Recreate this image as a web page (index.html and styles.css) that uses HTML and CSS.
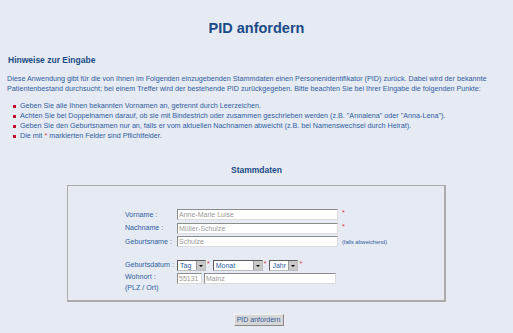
FILE: index.html
```html
<!DOCTYPE html>
<html lang="de">
<head>
<meta charset="utf-8">
<title>PID anfordern</title>
<link rel="stylesheet" href="styles.css">
</head>
<body>
<h1 class="title">PID anfordern</h1>
<h2 class="subtitle">Hinweise zur Eingabe</h2>
<p class="intro">Diese Anwendung gibt für die von Ihnen im Folgenden einzugebenden Stammdaten einen Personenidentifikator (PID) zurück. Dabei wird der bekannte Patientenbestand durchsucht; bei einem Treffer wird der bestehende PID zurückgegeben. Bitte beachten Sie bei Ihrer Eingabe die folgenden Punkte:</p>
<ul class="hints">
  <li>Geben Sie alle Ihnen bekannten Vornamen an, getrennt durch Leerzeichen.</li>
  <li>Achten Sie bei Doppelnamen darauf, ob sie mit Bindestrich oder zusammen geschrieben werden (z.B. "Annalena" oder "Anna-Lena").</li>
  <li>Geben Sie den Geburtsnamen nur an, falls er vom aktuellen Nachnamen abweicht (z.B. bei Namenswechsel durch Heirat).</li>
  <li>Die mit <span class="req">*</span> markierten Felder sind Pflichtfelder.</li>
</ul>
<h3 class="section">Stammdaten</h3>
<div class="box">
  <div class="form">
    <div class="row">
      <span class="label">Vorname :</span>
      <span class="field"><span class="input wide">Anne-Marie Luise</span><span class="req star">*</span></span>
    </div>
    <div class="row">
      <span class="label">Nachname :</span>
      <span class="field"><span class="input wide">Müller-Schulze</span><span class="req star">*</span></span>
    </div>
    <div class="row">
      <span class="label">Geburtsname :</span>
      <span class="field"><span class="input wide">Schulze</span><span class="note">(falls abweichend)</span></span>
    </div>
    <div class="row date">
      <span class="label">Geburtsdatum :</span>
      <span class="field">
        <span class="select tag"><span class="sel-text">Tag</span><span class="sel-btn"></span></span><span class="req star">*</span>
        <span class="select monat"><span class="sel-text">Monat</span><span class="sel-btn"></span></span><span class="req star">*</span>
        <span class="select jahr"><span class="sel-text">Jahr</span><span class="sel-btn"></span></span><span class="req star">*</span>
      </span>
    </div>
    <div class="row addr">
      <span class="label">Wohnort :<br>(PLZ / Ort)</span>
      <span class="field"><span class="input plz">55131</span><span class="input ort">Mainz</span></span>
    </div>
  </div>
</div>
<div class="actions"><span class="button">PID anfordern</span></div>
</body>
</html>
```
FILE: styles.css
```css
html, body {
  margin: 0;
  padding: 0;
}
body {
  background: #e5eaf3;
  font-family: "Liberation Sans", Arial, sans-serif;
  color: #30609e;
  width: 513px;
  height: 333px;
  overflow: hidden;
}
.title {
  margin: 19px 0 0;
  font-size: 14.5px;
  line-height: 18px;
  text-align: center;
  color: #1b4b86;
  font-weight: bold;
}
.subtitle {
  margin: 17.5px 0 0 8px;
  font-size: 8.5px;
  line-height: 11px;
  color: #1b4b86;
  font-weight: bold;
}
.intro {
  margin: 8.5px 0 0 7px;
  width: 500px;
  font-size: 7.2px;
  line-height: 10px;
}
.hints {
  margin: 7px 0 0;
  padding: 0 0 0 20px;
  list-style: none;
  font-size: 7.2px;
  line-height: 10px;
}
.hints li {
  position: relative;
}
.hints li::before {
  content: "";
  position: absolute;
  left: -7px;
  top: 4px;
  width: 3px;
  height: 3px;
  background: #c01030;
}
.req {
  color: #e03040;
}
.section {
  margin: 23.5px 0 0;
  font-size: 8.5px;
  line-height: 11px;
  text-align: center;
  color: #1b4b86;
  font-weight: bold;
}
.box {
  margin: 9.5px 0 0 67px;
  width: 376px;
  height: 114px;
  border: 1px solid #ababab;
  border-bottom-width: 2px;
  border-right-width: 2px;
  box-sizing: content-box;
}
.form {
  padding: 22px 0 0 57px;
  display: flex;
  flex-direction: column;
}
.row {
  display: grid;
  grid-template-columns: 52px auto;
  align-items: center;
  height: 13.5px;
  font-size: 7.1px;
}
.row.date {
  margin-top: 9.5px;
  height: 14px;
}
.row.addr {
  align-items: start;
  height: 22px;
  line-height: 11px;
}
.label {
  white-space: nowrap;
}
.field {
  display: flex;
  align-items: center;
}
.input {
  display: inline-block;
  box-sizing: border-box;
  height: 11px;
  background: #fff;
  border: 1px solid #dcdcdc;
  border-top-color: #8c8c8c;
  border-left-color: #8c8c8c;
  color: #9a9a9a;
  font-size: 7px;
  line-height: 9px;
  padding-left: 1px;
  white-space: nowrap;
  overflow: hidden;
}
.input.wide {
  width: 161px;
}
.input.plz {
  width: 25px;
  margin-top: 1px;
}
.input.ort {
  width: 132px;
  margin-left: 2px;
  margin-top: 1px;
}
.star {
  font-size: 7px;
  margin-left: 4px;
  position: relative;
  top: -2px;
}
.date .star {
  margin-left: 1px;
  margin-right: 3px;
}
.note {
  font-size: 5.6px;
  margin-left: 4px;
  color: #30609e;
}
.select {
  display: inline-flex;
  box-sizing: border-box;
  height: 11px;
  border: 1px solid #5a5a5a;
  border-right-color: #bdbdbd;
  border-bottom-color: #bdbdbd;
  background: #fff;
  align-items: stretch;
}
.select.tag { width: 29px; }
.select.monat { width: 50px; }
.select.jahr { width: 29px; }
.sel-text {
  flex: 1;
  font-size: 7px;
  line-height: 9px;
  color: #30609e;
  padding-left: 2px;
}
.sel-btn {
  width: 8px;
  background: #c9c9c9;
  border-left: 1px solid #9a9a9a;
  position: relative;
}
.sel-btn::after {
  content: "";
  position: absolute;
  left: 2px;
  top: 4px;
  border-left: 2px solid transparent;
  border-right: 2px solid transparent;
  border-top: 2px solid #000;
}
.actions {
  display: flex;
  justify-content: center;
  margin-top: 12px;
}
.button {
  display: inline-block;
  box-sizing: border-box;
  width: 50px;
  height: 12px;
  background: #d6d6d6;
  border: 1px solid #f0f0f0;
  border-right-color: #8a8a8a;
  border-bottom-color: #8a8a8a;
  color: #30609e;
  font-size: 7px;
  line-height: 10px;
  text-align: center;
  margin-left: 4px;
}
```
